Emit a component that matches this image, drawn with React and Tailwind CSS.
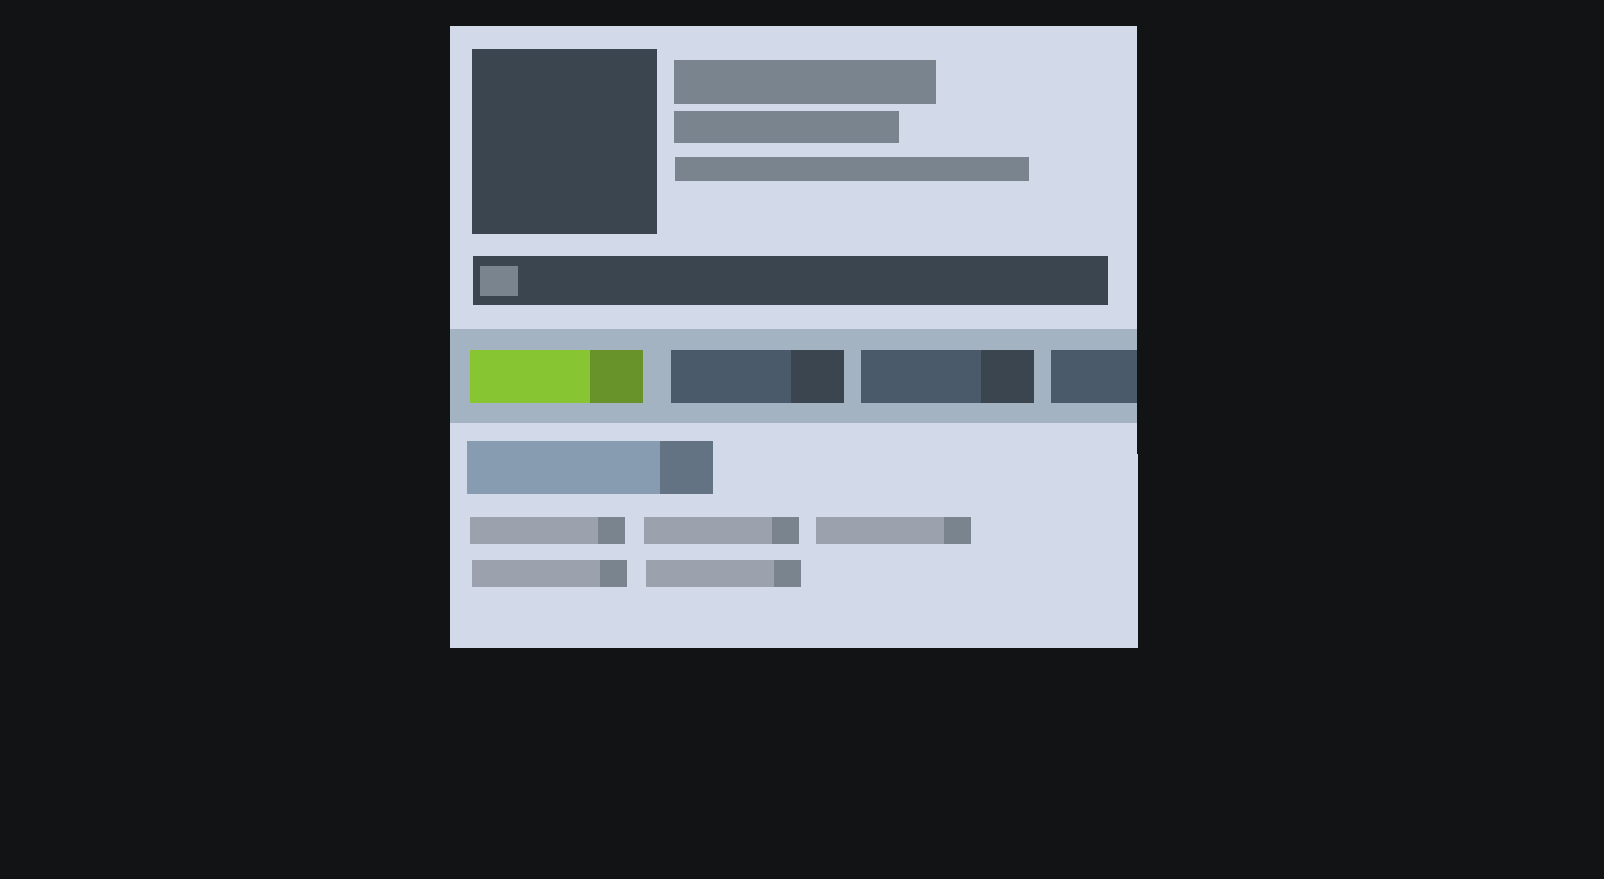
import React from 'react';

const Pill = ({ className = '' }) => (
    <div className={`flex h-[27px] ${className}`}>
        <div className="w-[128px] bg-[#9ba1ad]" />
        <div className="w-[27px] bg-[#7a848f]" />
    </div>
);

const BandButton = ({ main, side, className = '' }) => (
    <div className={`flex h-[53px] shrink-0 ${className}`}>
        <div className={`w-[120px] ${main}`} />
        <div className={`w-[53px] ${side}`} />
    </div>
);

const App = () => {
    return (
        <div className="min-h-screen bg-[#121315] pt-[26px] pl-[450px]">
            <div className="flex w-[688px] flex-col">
                {/* header card */}
                <div className="w-[687px] bg-[#d2d9e8] pt-[23px] pb-[24px]">
                    <div className="flex pl-[22px]">
                        <div className="h-[185px] w-[185px] bg-[#3a4550]" />
                        <div className="ml-[17px] flex flex-col pt-[11px]">
                            <div className="h-[44px] w-[262px] bg-[#7a848f]" />
                            <div className="mt-[7px] h-[32px] w-[225px] bg-[#7a848f]" />
                            <div className="mt-[14px] ml-px h-[24px] w-[354px] bg-[#7a848f]" />
                        </div>
                    </div>
                    <div className="mt-[22px] ml-[23px] h-[49px] w-[635px] bg-[#3a4550] pt-[10px] pl-[7px]">
                        <div className="h-[30px] w-[38px] bg-[#7a848f]" />
                    </div>
                </div>

                {/* tab band */}
                <div className="flex h-[94px] w-[687px] items-center overflow-hidden bg-[#a4b3c2] pl-[20px]">
                    <BandButton main="bg-[#88c532]" side="bg-[#68932a]" />
                    <BandButton main="bg-[#4b5a6b]" side="bg-[#3a4550]" className="ml-[28px]" />
                    <BandButton main="bg-[#4b5a6b]" side="bg-[#3a4550]" className="ml-[17px]" />
                    <BandButton main="bg-[#4b5a6b]" side="bg-[#3a4550]" className="ml-[17px]" />
                </div>

                {/* lower section */}
                <div className="flex">
                    <div className="h-[225px] w-[687px] bg-[#d2d9e8] pt-[18px]">
                        <div className="ml-[17px] flex h-[53px] w-[246px]">
                            <div className="w-[193px] bg-[#879cb0]" />
                            <div className="w-[53px] bg-[#637383]" />
                        </div>
                        <div className="mt-[23px] ml-[20px] flex">
                            <Pill />
                            <Pill className="ml-[19px]" />
                            <Pill className="ml-[17px]" />
                        </div>
                        <div className="mt-[16px] ml-[22px] flex">
                            <Pill />
                            <Pill className="ml-[19px]" />
                        </div>
                    </div>
                    <div className="flex w-px flex-col">
                        <div className="h-[31px]" />
                        <div className="flex-1 bg-[#d2d9e8]" />
                    </div>
                </div>
            </div>
        </div>
    );
};

export default App;
